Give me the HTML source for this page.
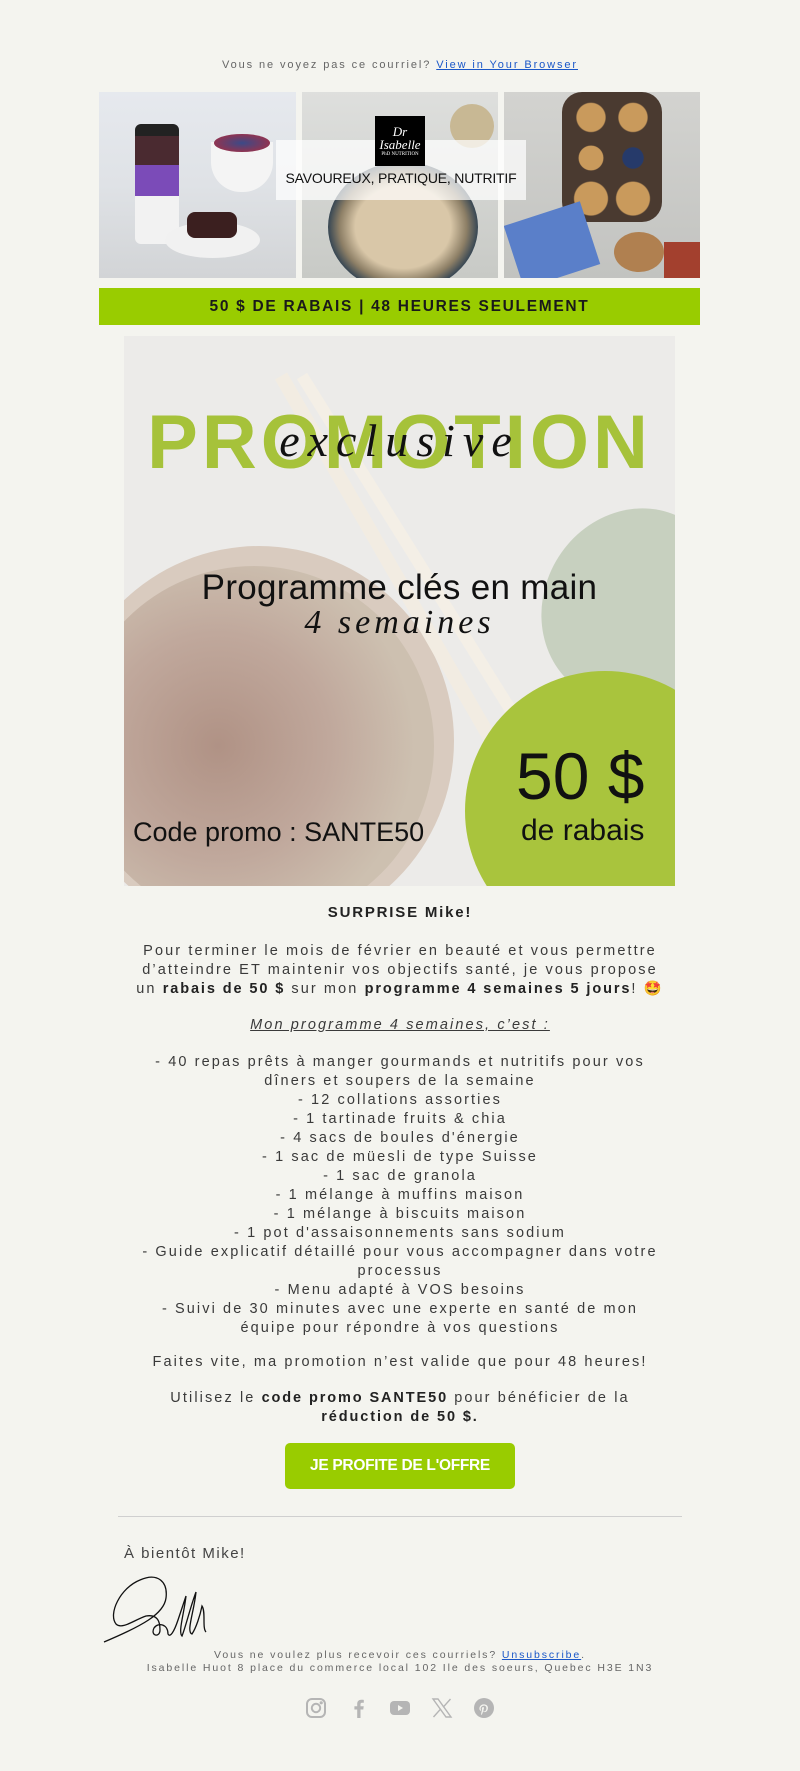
<!DOCTYPE html>
<html><head><meta charset="utf-8">
<style>
*{margin:0;padding:0;box-sizing:border-box}
body{width:800px;height:1771px;background:#f4f4ef;font-family:"Liberation Sans",sans-serif;color:#333;position:relative;overflow:hidden}
.a{position:absolute}
.c{position:absolute;left:0;width:800px;text-align:center;white-space:nowrap}
.t{font-size:14.5px;letter-spacing:2.1px;color:#3a3a3a}
.t b{color:#222;letter-spacing:1.9px}
</style></head><body>
<div class="c" style="top:59px;font-size:11px;letter-spacing:1.9px;color:#666">Vous ne voyez pas ce courriel? <span style="color:#1a57c8;text-decoration:underline">View in Your Browser</span></div>

<!-- header images -->
<div class="a" style="left:99px;top:92px;width:197px;height:186px;overflow:hidden;background:linear-gradient(180deg,#e6e9ee 0%,#dfe2e6 50%,#d2d4d6 100%)">
  <div class="a" style="left:36px;top:32px;width:44px;height:120px;border-radius:6px;background:linear-gradient(180deg,#222 0 10%,#4a2a30 10% 34%,#7b4bb8 34% 60%,#f2f2f2 60% 100%)"></div>
  <div class="a" style="left:112px;top:50px;width:62px;height:50px;border-radius:0 0 30px 30px;background:#f4f4f4"></div>
  <div class="a" style="left:115px;top:42px;width:56px;height:18px;border-radius:50%;background:radial-gradient(#3b4a88,#b22a3a)"></div>
  <div class="a" style="left:66px;top:130px;width:95px;height:36px;border-radius:50%;background:#f1f1f1"></div>
  <div class="a" style="left:88px;top:120px;width:50px;height:26px;border-radius:8px;background:#3b1f1f"></div>
</div>
<div class="a" style="left:302px;top:92px;width:196px;height:186px;overflow:hidden;background:linear-gradient(180deg,#dedfdd,#c8cac6)">
  <div class="a" style="left:26px;top:70px;width:150px;height:130px;border-radius:50%;background:radial-gradient(#d9c7a8 0 45%,#8d7f66 60%,#3c4a55 70%,#2b3a44 74%,transparent 75%)"></div>
  <div class="a" style="left:148px;top:12px;width:44px;height:44px;border-radius:50%;background:#c8b894"></div>
</div>
<div class="a" style="left:504px;top:92px;width:196px;height:186px;overflow:hidden;background:linear-gradient(180deg,#d3d3d0,#c2c3c0)">
  <div class="a" style="left:58px;top:0;width:100px;height:130px;border-radius:20px;background:#4a3a30"></div>
  <div class="a" style="left:66px;top:8px;width:84px;height:116px;background:radial-gradient(circle at 25% 15%,#c99a5c 12%,transparent 13%),radial-gradient(circle at 75% 15%,#c99a5c 12%,transparent 13%),radial-gradient(circle at 25% 50%,#c99a5c 14%,transparent 15%),radial-gradient(circle at 75% 50%,#263a6a 12%,transparent 13%),radial-gradient(circle at 25% 85%,#c99a5c 14%,transparent 15%),radial-gradient(circle at 75% 85%,#c99a5c 14%,transparent 15%)"></div>
  <div class="a" style="left:8px;top:120px;width:80px;height:66px;background:#5a7fc9;transform:rotate(-18deg)"></div>
  <div class="a" style="left:110px;top:140px;width:50px;height:40px;border-radius:50%;background:#b08050"></div>
  <div class="a" style="left:160px;top:150px;width:40px;height:40px;background:#a3402e"></div>
</div>
<div class="a" style="left:276px;top:140px;width:250px;height:60px;background:rgba(255,255,255,.72)"></div>
<div class="a" style="left:375px;top:116px;width:50px;height:50px;background:#000;color:#fff;text-align:center;font-family:'Liberation Serif',serif;font-style:italic;font-size:13px;line-height:13px;padding-top:9px">Dr<br>Isabelle<div style="font-size:5px;font-style:normal;line-height:8px">PhD NUTRITION</div></div>
<div class="a" style="left:276px;top:170px;width:250px;text-align:center;font-size:14px;color:#111;letter-spacing:-.2px">SAVOUREUX, PRATIQUE, NUTRITIF</div>

<!-- green bar -->
<div class="a" style="left:99px;top:288px;width:601px;height:37px;background:#99cc00;text-align:center;font-weight:bold;font-size:15.5px;letter-spacing:1.7px;color:#1a1a1a;line-height:37px">50 $ DE RABAIS | 48 HEURES SEULEMENT</div>

<!-- promo -->
<div class="a" style="left:124px;top:336px;width:551px;height:550px;overflow:hidden;background:#ecebe9">
  <div class="a" style="left:-60px;top:210px;width:390px;height:390px;border-radius:50%;background:#d9cbbf"></div>
  <div class="a" style="left:-50px;top:230px;width:360px;height:360px;border-radius:50%;background:radial-gradient(circle at 40% 50%,#b09285 0%,#c0a89c 40%,#cdc0b0 70%)"></div>
  <div class="a" style="left:150px;top:40px;width:14px;height:560px;background:#f2ece2;transform:rotate(-30deg);transform-origin:top"></div>
  <div class="a" style="left:172px;top:40px;width:12px;height:560px;background:#f4efe6;transform:rotate(-32deg);transform-origin:top"></div>
  <div class="a" style="left:420px;top:170px;width:180px;height:200px;border-radius:50%;background:#c7d0bf;transform:rotate(30deg)"></div>
  <div class="a" style="left:341px;top:335px;width:280px;height:280px;border-radius:50%;background:#a9c43d"></div>
  <div class="a" style="left:0;top:62px;width:551px;text-align:center;font-weight:bold;font-size:76px;letter-spacing:4px;color:#a6c23a;line-height:90px">PROMOTION</div>
  <div class="a" style="left:0;top:60px;width:551px;text-align:center;font-family:'Liberation Serif',serif;font-style:italic;font-size:46px;letter-spacing:8px;color:#111;line-height:90px">exclusive</div>
  <div class="a" style="left:0;top:232px;width:551px;text-align:center;font-size:35px;color:#111;letter-spacing:.3px">Programme clés en main</div>
  <div class="a" style="left:0;top:268px;width:551px;text-align:center;font-family:'Liberation Serif',serif;font-style:italic;font-size:34px;letter-spacing:4px;color:#111">4 semaines</div>
  <div class="a" style="left:392px;top:402px;font-size:66px;color:#111">50 $</div>
  <div class="a" style="left:397px;top:478px;font-size:30px;color:#111">de rabais</div>
  <div class="a" style="left:9px;top:481px;font-size:27px;color:#111">Code promo : SANTE50</div>
</div>

<!-- text -->
<div class="c" style="top:904px;font-weight:bold;font-size:15px;letter-spacing:1.8px;color:#222">SURPRISE Mike!</div>
<div class="c t" style="top:942px;line-height:19px">Pour terminer le mois de février en beauté et vous permettre<br>d’atteindre ET maintenir vos objectifs santé, je vous propose<br>un <b>rabais de 50 $</b> sur mon <b>programme 4 semaines 5 jours</b>! 🤩</div>
<div class="c t" style="top:1017px;font-style:italic;text-decoration:underline">Mon programme 4 semaines, c’est : </div>
<div class="c t" style="top:1053px;line-height:19px">- 40 repas prêts à manger gourmands et nutritifs pour vos<br>dîners et soupers de la semaine<br>- 12 collations assorties<br>- 1 tartinade fruits &amp; chia<br>- 4 sacs de boules d'énergie<br>- 1 sac de müesli de type Suisse<br>- 1 sac de granola<br>- 1 mélange à muffins maison<br>- 1 mélange à biscuits maison<br>- 1 pot d'assaisonnements sans sodium<br>- Guide explicatif détaillé pour vous accompagner dans votre<br>processus<br>- Menu adapté à VOS besoins<br>- Suivi de 30 minutes avec une experte en santé de mon<br>équipe pour répondre à vos questions</div>
<div class="c t" style="top:1354px">Faites vite, ma promotion n’est valide que pour 48 heures!</div>
<div class="c t" style="top:1389px;line-height:19px">Utilisez le <b>code promo SANTE50</b> pour bénéficier de la<br><b>réduction de 50 $.</b></div>

<div class="a" style="left:285px;top:1443px;width:230px;height:46px;background:#99cc00;border-radius:5px;color:#fff;font-weight:bold;font-size:15.5px;text-align:center;line-height:46px;letter-spacing:-.3px">JE PROFITE DE L'OFFRE</div>
<div class="a" style="left:118px;top:1516px;width:564px;height:1px;background:#cfcfcf"></div>
<div class="a" style="left:124px;top:1545px;font-size:15px;letter-spacing:1.5px;color:#444">À bientôt Mike!</div>
<svg class="a" style="left:102px;top:1574px" width="140" height="70" viewBox="0 0 140 70" fill="none" stroke="#111" stroke-width="1.3">
<path d="M2 68 C40 52 62 40 64 24 C66 8 56 -2 38 6 C18 14 6 40 14 50 C20 56 32 46 44 42 C56 40 58 48 58 56 C58 64 48 62 52 54 C56 48 66 50 66 60 C68 64 72 58 76 46 C78 40 80 34 84 22 C82 40 76 58 80 62 C84 52 88 34 94 18 C92 38 84 58 90 60 C94 54 98 42 100 32 C104 38 100 54 104 58"/>
</svg>
<div class="c" style="top:1649px;font-size:10.5px;letter-spacing:1.9px;color:#666;line-height:13px">Vous ne voulez plus recevoir ces courriels? <span style="color:#1a57c8;text-decoration:underline">Unsubscribe</span>.<br>Isabelle Huot 8 place du commerce local 102 Ile des soeurs, Quebec H3E 1N3</div>

<!-- social -->
<svg class="a" style="left:305px;top:1697px" width="22" height="22" viewBox="0 0 22 22" fill="none" stroke="#b5b5b5" stroke-width="2"><rect x="2" y="2" width="18" height="18" rx="5"/><circle cx="11" cy="11" r="4.2"/><circle cx="16.2" cy="5.8" r=".6" fill="#b5b5b5"/></svg>
<svg class="a" style="left:348px;top:1697px" width="22" height="22" viewBox="0 0 22 22"><path d="M12.5 21V12.5h2.8l.4-3.2h-3.2V7.3c0-.9.3-1.6 1.6-1.6h1.7V2.9c-.3 0-1.3-.1-2.5-.1-2.5 0-4.1 1.5-4.1 4.2v2.3H6.4v3.2h2.8V21z" fill="#b5b5b5"/></svg>
<svg class="a" style="left:389px;top:1697px" width="22" height="22" viewBox="0 0 22 22"><rect x="1" y="4" width="20" height="14" rx="4" fill="#b5b5b5"/><path d="M9 8l5 3-5 3z" fill="#f4f4ef"/></svg>
<svg class="a" style="left:431px;top:1697px" width="22" height="22" viewBox="0 0 22 22" fill="none" stroke="#b5b5b5" stroke-width="1.4"><path d="M2 2h5l13 18h-5z"/><path d="M19.5 2l-7.3 8.2M2.5 20l7.3-8.2"/></svg>
<svg class="a" style="left:473px;top:1697px" width="22" height="22" viewBox="0 0 22 22"><circle cx="11" cy="11" r="10" fill="#b5b5b5"/><path d="M10.2 13.5c-.4 2-.9 3.8-2 4.8-.3-2.2.5-3.8.9-5.6-.6-1 .1-3.1 1.4-2.6 1.6.6-1.4 3.9.6 4.3 2.1.4 3-3.7 1.7-5-1.9-1.9-5.5 0-5.1 2.7.1.7.8.9.3 1.8-1.3-.3-1.7-1.300-1.6-2.6.2-2.2 2-3.7 3.8-3.9 2.3-.3 4.4.8 4.7 2.9.3 2.4-1 5-3.4 4.8-.7 0-.9-.4-1.3-.6z" fill="#f4f4ef"/></svg>
</body></html>
